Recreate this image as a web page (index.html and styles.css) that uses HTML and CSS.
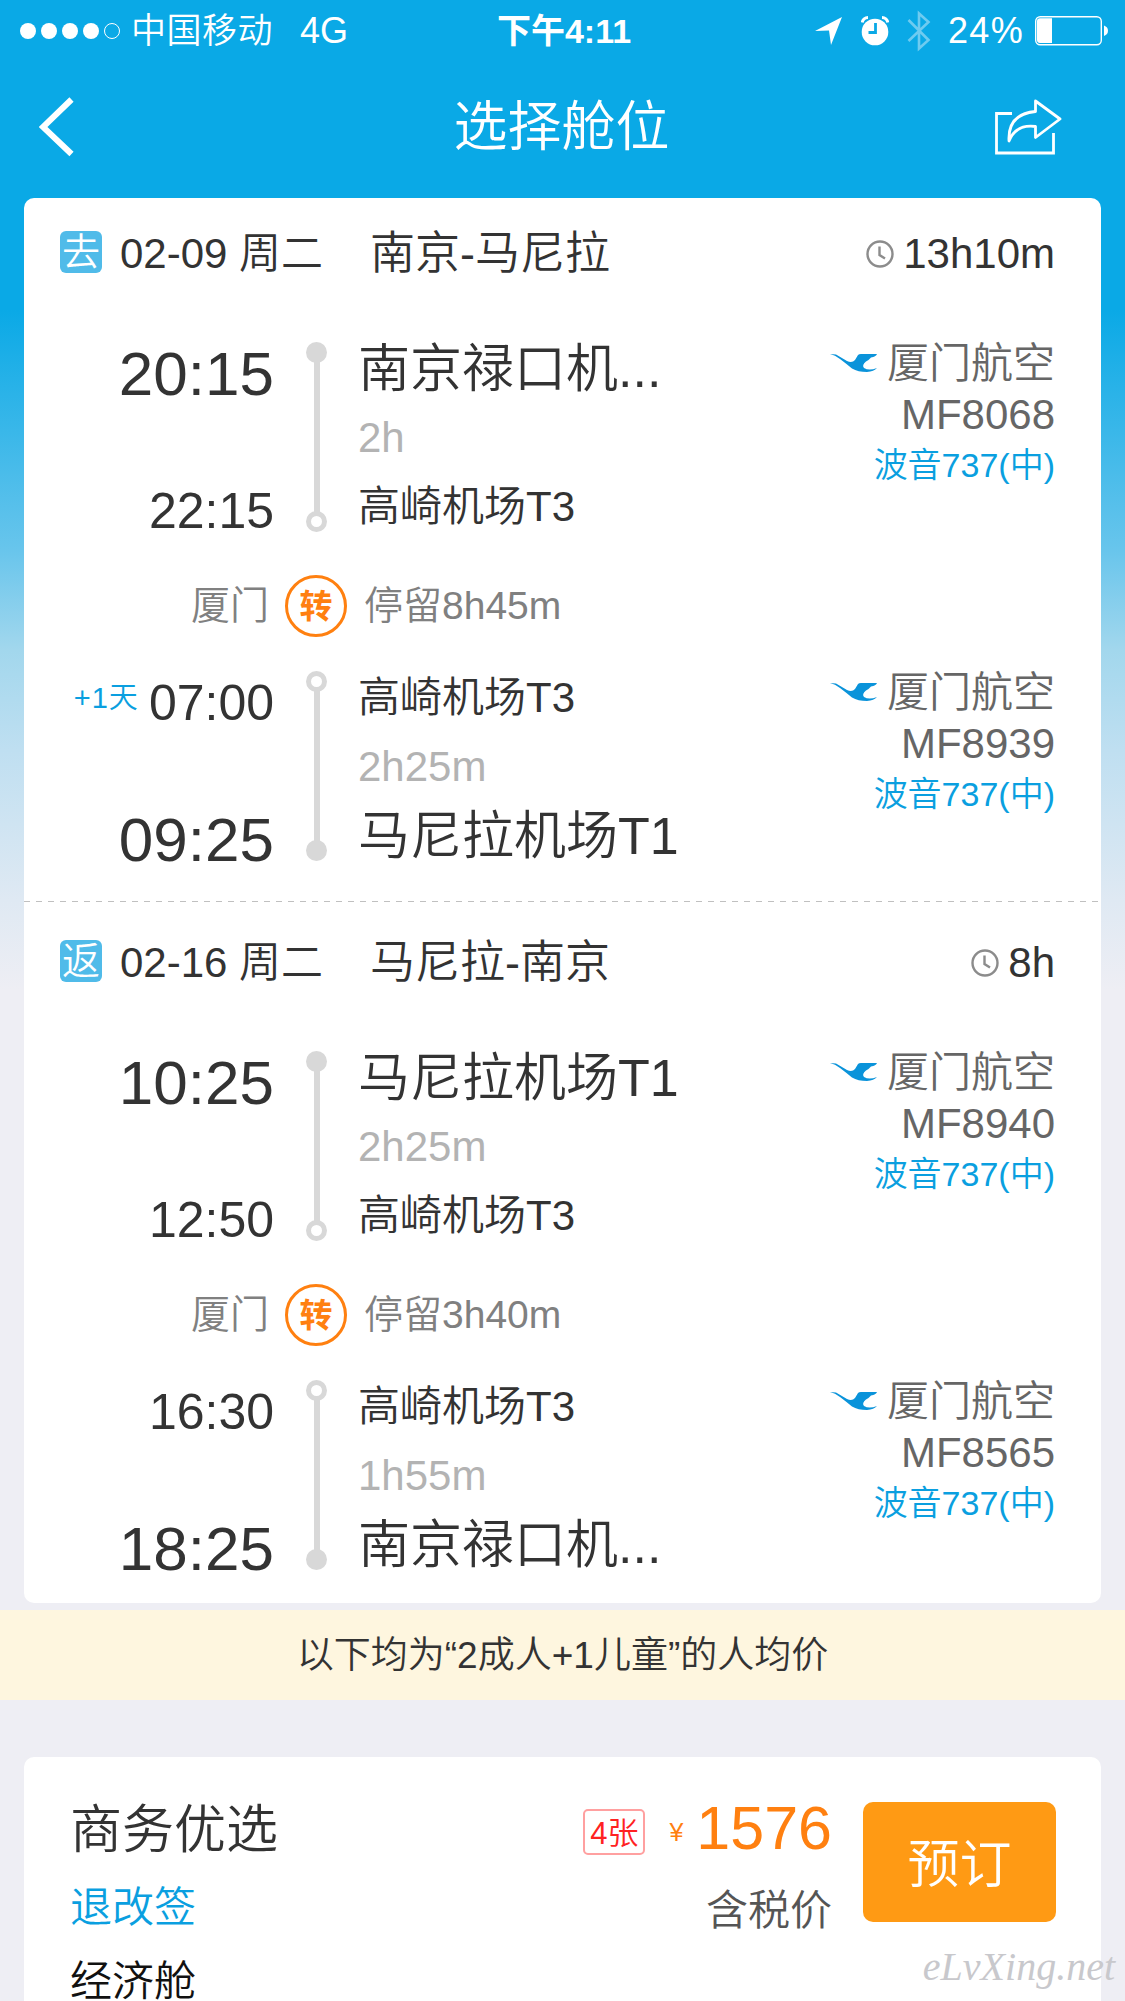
FILE: index.html
```html
<!DOCTYPE html>
<html lang="zh-CN">
<head>
    <meta charset="UTF-8">
    <meta name="viewport" content="width=device-width, initial-scale=1.0">
    <title>选择舱位</title>
    <link rel="stylesheet" href="styles.css">
</head>
<body>

    <!-- shared icons -->
    <svg class="sprite" width="0" height="0">
        <symbol id="icon-clock" viewBox="0 0 28 28">
            <circle cx="14" cy="14" r="12.5" fill="none" stroke="#8c8c8c" stroke-width="2.4"/>
            <path d="M13.500 6.500v8.500l5.500 3.500" fill="none" stroke="#8c8c8c" stroke-width="2.400"/>
        </symbol>
        <symbol id="icon-airline" viewBox="0 0 48 42">
            <path d="M0 12 L6 12.500 L17 19 Q22 21.500 25 18 L28 13 Q29 12 31 12 L47 12 Q46 14.500 41 15.500 Q39 18 36 19.500 Q31.500 23 34 26 Q39 29 47 26 Q44 29.500 37 30 Q28 30 22 26.500 Q16 21.500 10 17 Q5 13 0 12Z" fill="#0a93da"/>
        </symbol>
    </svg>

    <div class="page">
        <div class="status-bar">
            <div class="status-left">
                <div class="signal"><i></i><i></i><i></i><i></i><i class="empty"></i></div>
                <span class="operator">中国移动</span>
                <span>4G</span>
            </div>
            <div class="status-time">下午4:11</div>
            <div class="status-right">
                <svg class="icon-location" width="27" height="28" viewBox="0 0 27 28"><path d="M27 0 L16 28 L14 13.500 L0 14Z" fill="#fff"/></svg>
                <svg class="icon-alarm" width="28" height="30" viewBox="0 0 28 30">
                    <circle cx="14" cy="16" r="13.300" fill="#fff"/>
                    <path d="M1.200 6.500 A6 6 0 0 1 7 1.500 M21 1.500 A6 6 0 0 1 26.800 6.500" fill="none" stroke="#fff" stroke-width="3"/>
                    <path d="M14.500 7v9.500H7.500" fill="none" stroke="#0aa9e6" stroke-width="2.800"/>
                </svg>
                <svg class="icon-bluetooth" width="24" height="42" viewBox="0 0 24 42"><path d="M1.500 10 L21.500 30 L12 38.500 V3.500 L21.500 12 L1.500 31" fill="none" stroke="#6ecbf0" stroke-width="2.600"/></svg>
                <span class="battery-text">24%</span>
                <svg class="icon-battery" width="73" height="30" viewBox="0 0 73 30">
                    <rect x=".7" y=".7" width="65.600" height="28" rx="4.500" fill="none" stroke="#fff" stroke-width="1.400"/>
                    <path d="M5 2.300h12v24.700H5q-3 0-3-3V5.300q0-3 3-3Z" fill="#fff"/>
                    <path d="M69 9.500q4 1.500 4 5.200t-4 5.200Z" fill="#fff"/>
                </svg>
            </div>
        </div>

        <div class="nav-bar">
            <svg width="36" height="60" viewBox="0 0 36 60"><path d="M32.500 2.500 L4 30 L32.500 57" fill="none" stroke="#fff" stroke-width="6"/></svg>
            <h1>选择舱位</h1>
            <svg width="68" height="56" viewBox="0 0 68 56" fill="none" stroke="#fff" stroke-width="2.800">
                <path d="M17 14.500H1.500V54H58.500V34"/>
                <path d="M40.500 2 L65 20 L40.500 38.500 V27.500 Q21 25 14 42 Q12.500 15 40.500 12.500Z" stroke-linejoin="round"/>
            </svg>
        </div>

        <div class="card flights">
            <div class="trip">
                <div class="trip-head">
                    <span class="tag">去</span>
                    <span class="date">02-09 周二</span>
                    <span class="route">南京-马尼拉</span>
                    <svg class="clock"><use href="#icon-clock"/></svg>
                    <span class="total">13h10m</span>
                </div>
                <div class="leg">
                    <div class="times">
                        <div class="big">20:15</div>
                        <div>22:15</div>
                    </div>
                    <div class="track"><i class="dot"></i><i class="line"></i><i class="dot hollow"></i></div>
                    <div class="airports">
                        <div class="big">南京禄口机...</div>
                        <div class="duration">2h</div>
                        <div>高崎机场T3</div>
                    </div>
                    <div class="carrier">
                        <div><svg class="airline"><use href="#icon-airline"/></svg>厦门航空</div>
                        <div>MF8068</div>
                        <div class="plane">波音737(中)</div>
                    </div>
                </div>
                <div class="transfer">
                    <span class="city">厦门</span>
                    <span class="badge">转</span>
                    <span>停留8h45m</span>
                </div>
                <div class="leg">
                    <div class="times">
                        <div><span class="next-day">+1天</span>07:00</div>
                        <div class="big">09:25</div>
                    </div>
                    <div class="track"><i class="dot hollow"></i><i class="line"></i><i class="dot"></i></div>
                    <div class="airports">
                        <div>高崎机场T3</div>
                        <div class="duration">2h25m</div>
                        <div class="big">马尼拉机场T1</div>
                    </div>
                    <div class="carrier">
                        <div><svg class="airline"><use href="#icon-airline"/></svg>厦门航空</div>
                        <div>MF8939</div>
                        <div class="plane">波音737(中)</div>
                    </div>
                </div>
            </div>
            <div class="divider"></div>

            <div class="trip trip-back">
                <div class="trip-head">
                    <span class="tag">返</span>
                    <span class="date">02-16 周二</span>
                    <span class="route">马尼拉-南京</span>
                    <svg class="clock"><use href="#icon-clock"/></svg>
                    <span class="total">8h</span>
                </div>
                <div class="leg">
                    <div class="times">
                        <div class="big">10:25</div>
                        <div>12:50</div>
                    </div>
                    <div class="track"><i class="dot"></i><i class="line"></i><i class="dot hollow"></i></div>
                    <div class="airports">
                        <div class="big">马尼拉机场T1</div>
                        <div class="duration">2h25m</div>
                        <div>高崎机场T3</div>
                    </div>
                    <div class="carrier">
                        <div><svg class="airline"><use href="#icon-airline"/></svg>厦门航空</div>
                        <div>MF8940</div>
                        <div class="plane">波音737(中)</div>
                    </div>
                </div>
                <div class="transfer">
                    <span class="city">厦门</span>
                    <span class="badge">转</span>
                    <span>停留3h40m</span>
                </div>
                <div class="leg">
                    <div class="times">
                        <div>16:30</div>
                        <div class="big">18:25</div>
                    </div>
                    <div class="track"><i class="dot hollow"></i><i class="line"></i><i class="dot"></i></div>
                    <div class="airports">
                        <div>高崎机场T3</div>
                        <div class="duration">1h55m</div>
                        <div class="big">南京禄口机...</div>
                    </div>
                    <div class="carrier">
                        <div><svg class="airline"><use href="#icon-airline"/></svg>厦门航空</div>
                        <div>MF8565</div>
                        <div class="plane">波音737(中)</div>
                    </div>
                </div>
            </div>
        </div>

        <div class="notice">以下均为“2成人+1儿童”的人均价</div>

        <div class="card fare">
            <div class="fare-info">
                <div class="fare-name">商务优选</div>
                <div class="fare-rule">退改签</div>
                <div class="fare-cabin">经济舱</div>
            </div>
            <div class="fare-price">
                <div class="price-row">
                    <span class="tickets">4张</span>
                    <span class="yen">¥</span>
                    <span class="amount">1576</span>
                </div>
                <div class="tax">含税价</div>
            </div>
            <button class="book-btn">预订</button>
        </div>

        <div class="watermark">eLvXing.net</div>
    </div>

</body>
</html>
```
FILE: styles.css
```css
* {
    box-sizing: border-box;
}
body {
    margin: 0;
    font-family: "Liberation Sans", "Noto Sans CJK SC", sans-serif;
    font-weight: 350;
    font-size: 42px;
    color: #333;
    background: #eeeef4;
}
.page {
    position: relative;
    width: 1125px;
    height: 2001px;
    overflow: hidden;
    background: linear-gradient(#0aa9e6 310px, #68c5ec 550px, #a2d7ed 650px, #bfdff1 750px, #dfe9f3 900px, #eeeef4 990px);
}
.sprite {
    position: absolute;
}

/* status bar */
.status-bar {
    display: grid;
    grid-template-columns: 1fr auto 1fr;
    align-items: center;
    height: 62px;
    padding: 0 17px 0 20px;
    font-size: 36px;
    line-height: 62px;
    color: #fff;
}
.status-left, .status-right {
    display: flex;
    align-items: center;
}
.status-right {
    justify-content: flex-end;
}
.signal {
    display: flex;
    gap: 5px;
    margin-right: 11px;
}
.signal i {
    width: 16px;
    height: 16px;
    border-radius: 50%;
    background: #fff;
}
.signal .empty {
    background: none;
    border: 1px solid #fff;
}
.operator {
    font-size: 35px;
    letter-spacing: 0.5px;
    margin-right: 27px;
}
.status-time {
    font-size: 34px;
    font-weight: 700;
}
.icon-alarm { margin-left: 19px; }
.icon-bluetooth { margin-left: 18px; }
.battery-text {
    margin-left: 17px;
    letter-spacing: 1.3px;
}
.icon-battery { margin-left: 11px; }

/* title bar */
.nav-bar {
    display: flex;
    justify-content: space-between;
    align-items: center;
    height: 136px;
    padding: 0 62px 6px 39px;
    color: #fff;
}
.nav-bar h1 {
    margin: 0 0 0 53px;
    font-size: 54px;
    font-weight: 350;
    line-height: 70px;
}

.card {
    margin: 0 24px;
    background: #fff;
    border-radius: 10px;
}

/* trips */
.trip {
    padding: 33px 46px 40px 0;
}
.trip-back {
    padding: 38px 46px 33px 0;
}
.divider {
    height: 1px;
    background: repeating-linear-gradient(90deg, #c0c0c0 0 6px, #fff 6px 12px);
}
.trip-head {
    display: flex;
    align-items: center;
    height: 46px;
    margin-bottom: 65px;
    padding-left: 36px;
    line-height: 46px;
}
.tag {
    width: 42px;
    height: 42px;
    margin: 0 18px 4px 0;
    border-radius: 6px;
    background: #50bbe9;
    color: #fff;
    font-size: 38px;
    line-height: 42px;
    text-align: center;
}
.route {
    margin-left: 47px;
    font-size: 45px;
}
.clock {
    width: 28px;
    height: 28px;
    margin: 0 9px 0 auto;
}
.leg {
    display: grid;
    grid-template-columns: 251px 52px 1fr auto;
    grid-template-rows: 190px;
}
.times {
    display: flex;
    flex-direction: column;
    justify-content: space-between;
    height: 201px;
    padding-right: 1px;
    font-size: 50px;
    line-height: 64px;
    text-align: right;
}
.times .big {
    font-size: 62px;
}
.next-day {
    margin-right: 10px;
    font-size: 29px;
    letter-spacing: 1px;
    color: #0a9fe0;
    vertical-align: 12px;
    line-height: 28px;
}
.track {
    display: flex;
    flex-direction: column;
    align-items: center;
    padding-left: 31px;
}
.dot {
    width: 21px;
    height: 21px;
    border-radius: 50%;
    background: #d8d8d8;
}
.hollow {
    background: #fff;
    border: 5px solid #d8d8d8;
}
.line {
    flex: 1;
    width: 6px;
    margin: -1px 0;
    background: #d8d8d8;
}
.airports {
    display: flex;
    flex-direction: column;
    justify-content: space-between;
    height: 191px;
    padding: 1px 0 0 31px;
    line-height: 52px;
}
.airports .big {
    font-size: 52px;
}
.duration {
    color: #b3b3b3;
}
.carrier {
    margin-top: -4px;
    line-height: 51px;
    text-align: right;
    color: #666;
}
.airline {
    width: 48px;
    height: 42px;
    margin-right: 9px;
    vertical-align: -6px;
}
.carrier .plane {
    font-size: 34px;
    color: #0a9fe0;
}
.transfer {
    display: flex;
    align-items: center;
    height: 62px;
    margin: 43px 0 34px;
    font-size: 39px;
    line-height: 62px;
    color: #808080;
}
.city {
    width: 245px;
    text-align: right;
}
.badge {
    width: 62px;
    height: 62px;
    margin: 0 17px 0 16px;
    border: 3px solid #ff8010;
    border-radius: 50%;
    color: #ff8010;
    font-size: 33px;
    font-weight: 700;
    line-height: 58px;
    text-align: center;
}

.notice {
    height: 90px;
    margin: 7px 0 57px;
    background: #fef6df;
    font-size: 37px;
    line-height: 92px;
    text-align: center;
}

/* fare card */
.fare {
    display: flex;
    align-items: flex-start;
    height: 300px;
    padding: 45px 45px 0 46px;
}
.fare-info {
    flex: 1;
}
.fare-name {
    font-size: 52px;
    line-height: 56px;
}
.fare-rule {
    margin-top: 22px;
    line-height: 56px;
    color: #0a9fe0;
}
.fare-cabin {
    margin-top: 26px;
    line-height: 40px;
    color: #111;
}
.fare-price {
    margin-right: 31px;
    text-align: right;
}
.price-row {
    display: flex;
    align-items: center;
    justify-content: flex-end;
    height: 52px;
    color: #ff8010;
}
.tickets {
    height: 46px;
    margin-top: 8px;
    padding: 0 5px;
    border: 2px solid #ffa0a0;
    border-radius: 5px;
    color: #f22;
    font-size: 31px;
    line-height: 45px;
}
.yen {
    margin: 8px 13px 0 24px;
    font-size: 25px;
}
.amount {
    font-size: 61px;
}
.tax {
    margin-top: 31px;
    line-height: 52px;
    color: #555;
}
.book-btn {
    width: 193px;
    height: 120px;
    padding: 0 0 4px;
    border: none;
    border-radius: 10px;
    background: #ff9a14;
    color: #fff;
    font-family: inherit;
    font-size: 52px;
    font-weight: 350;
}
.watermark {
    position: absolute;
    right: 10px;
    bottom: 12px;
    color: #c8c8cc;
    font-family: "Liberation Serif", serif;
    font-size: 40px;
    font-style: italic;
    line-height: 44px;
}
```
